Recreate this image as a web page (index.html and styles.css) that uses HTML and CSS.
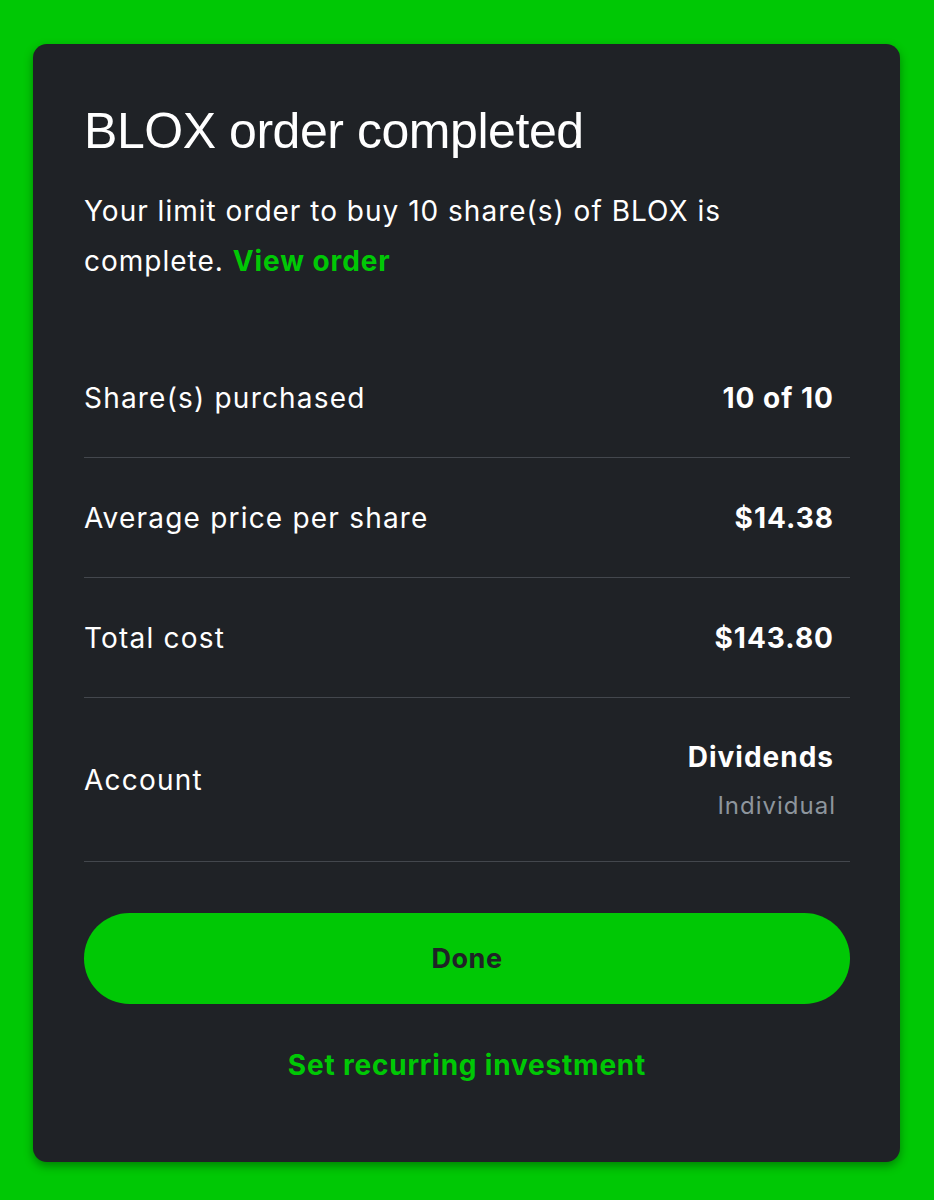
FILE: index.html
```html
<!DOCTYPE html>
<html lang="en">

<head>
    <meta charset="UTF-8">
    <meta name="viewport" content="width=device-width, initial-scale=1.0">
    <title>Order completed</title>
    <link rel="stylesheet" href="styles.css">
</head>

<body>
    <div class="card">
        <h1 class="title">BLOX order completed</h1>
        <p class="desc">Your limit order to buy 10 share(s) of BLOX is complete. <a href="#" class="link">View order</a></p>

        <ul class="rows">
            <li class="row">
                <span class="label">Share(s) purchased</span>
                <span class="value">10 of 10</span>
            </li>
            <li class="row">
                <span class="label">Average price per share</span>
                <span class="value">$14.38</span>
            </li>
            <li class="row">
                <span class="label">Total cost</span>
                <span class="value">$143.80</span>
            </li>
            <li class="row row-account">
                <span class="label">Account</span>
                <span class="value-box">
                    <span class="value">Dividends</span>
                    <span class="sub">Individual</span>
                </span>
            </li>
        </ul>

        <button type="button" class="btn-done">Done</button>
        <button type="button" class="btn-link">Set recurring investment</button>
    </div>
</body>

</html>
```

FILE: styles.css
```css
* {
    margin: 0;
    padding: 0;
    list-style: none;
    box-sizing: border-box;
}

body {
    background-color: #00c805;
    padding: 44px 34px 38px 33px;
    font-family: Inter, "Noto Sans", sans-serif;
    color: #fff;
}

.card {
    background-color: #1f2226;
    border-radius: 14px;
    box-shadow: 0 4px 10px rgba(0, 0, 0, 0.35);
    padding: 62px 50px 66px 51px;
    height: 1118px;
}

.title {
    font-family: "Liberation Sans", Arial, sans-serif;
    font-weight: normal;
    font-size: 50px;
    line-height: 50px;
    letter-spacing: -0.45px;
}

.desc {
    margin-top: 30px;
    font-size: 28px;
    line-height: 50px;
    letter-spacing: 1px;
}

.link {
    color: #00c805;
    font-weight: bold;
    letter-spacing: 0.9px;
    text-decoration: none;
}

.rows {
    margin-top: 52px;
}

.row {
    display: flex;
    justify-content: space-between;
    align-items: center;
    height: 120px;
    padding-right: 16px;
    border-bottom: 1px solid #43474d;
    font-size: 28px;
    letter-spacing: 1.2px;
}

.row-account {
    height: 164px;
}

.value {
    font-weight: bold;
    letter-spacing: 1px;
}

.value-box {
    display: flex;
    flex-direction: column;
    align-items: flex-end;
    gap: 17px;
}

.sub {
    font-size: 24px;
    letter-spacing: 1px;
    color: #8d959d;
    margin-right: -2px;
}

.btn-done {
    display: block;
    width: 100%;
    height: 91px;
    margin-top: 51px;
    border: 0;
    border-radius: 46px;
    background-color: #00c805;
    color: #1f2226;
    font-family: Inter, "Noto Sans", sans-serif;
    font-weight: bold;
    font-size: 27px;
    letter-spacing: 0.5px;
    cursor: pointer;
}

.btn-link {
    display: block;
    margin: 44px auto 0;
    background-color: transparent;
    border: 0;
    color: #00c805;
    font-family: Inter, "Noto Sans", sans-serif;
    font-weight: bold;
    font-size: 28px;
    letter-spacing: 0.8px;
    cursor: pointer;
}
```
